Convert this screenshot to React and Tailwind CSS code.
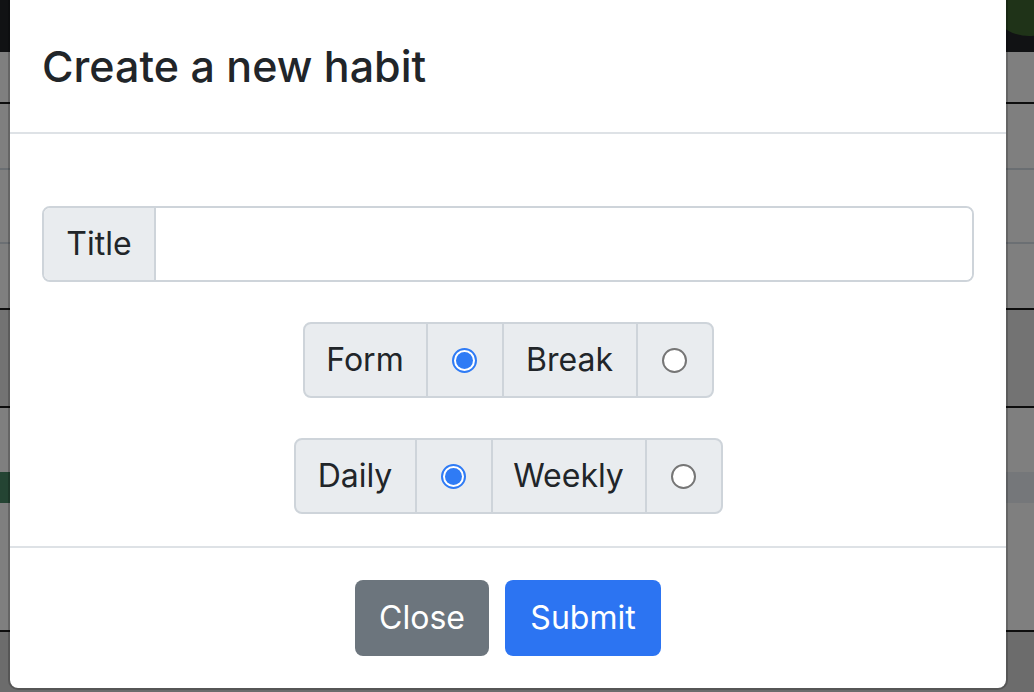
import React from "react";

function Radio({ checked }) {
  if (checked) {
    return (
      <div className="w-[25px] h-[25px] rounded-full border-2 border-[#2f7bf5] bg-white flex items-center justify-center">
        <div className="w-[17px] h-[17px] rounded-full bg-[#2f7bf5]" />
      </div>
    );
  }
  return <div className="w-[25px] h-[25px] rounded-full border-2 border-[#767676] bg-white" />;
}

function Segmented({ a, aw, b, bw }) {
  return (
    <div className="flex h-[76px] border-2 border-[#ced4da] rounded-[8px] overflow-hidden bg-[#e9ecef] divide-x-2 divide-[#ced4da]">
      <div className={`${aw} flex items-center justify-center text-[32px] text-[#212529]`}>{a}</div>
      <div className="w-[76px] flex items-center justify-center">
        <Radio checked />
      </div>
      <div className={`${bw} flex items-center justify-center text-[32px] text-[#212529]`}>{b}</div>
      <div className="w-[74px] flex items-center justify-center">
        <Radio />
      </div>
    </div>
  );
}

export default function App() {
  return (
    <div className="relative w-[1034px] h-[692px] overflow-hidden font-['Inter','Noto_Sans',sans-serif]">
      {/* dimmed page behind */}
      <div className="flex flex-col w-full h-full">
        <div className="h-[52px] bg-[#111214]" />
        <div className="h-[50px] bg-[#7f7f7f]" />
        <div className="h-[2px] bg-[#0d0d0d]" />
        <div className="h-[64px] bg-[#7f7f7f]" />
        <div className="h-[2px] bg-[#6a6e72]" />
        <div className="h-[72px] bg-[#7f7f7f]" />
        <div className="h-[2px] bg-[#6b6f73]" />
        <div className="h-[64px] bg-[#7f7f7f]" />
        <div className="h-[2px] bg-[#0d0d0d]" />
        <div className="h-[96px] bg-[#737373]" />
        <div className="h-[2px] bg-[#0d0d0d]" />
        <div className="h-[64px] bg-[#7f7f7f]" />
        <div className="h-[31px] flex">
          <div className="w-[500px] bg-[#244433]" />
          <div className="flex-1 bg-[#75777a]" />
        </div>
        <div className="h-[127px] bg-[#7f7f7f]" />
        <div className="h-[2px] bg-[#0d0d0d]" />
        <div className="flex-1 bg-[#6c6c6c]" />
      </div>
      <div className="absolute left-[985px] top-[-52px] w-[88px] h-[88px] rounded-full bg-[#1f3318]" />

      {/* modal */}
      <div className="absolute left-[8px] top-[-20px] w-[1000px] bg-white bg-clip-padding border-2 border-[rgba(0,0,0,0.2)] rounded-[10px] flex flex-col">
        <div className="h-[152px] border-b-2 border-[#dee2e6] px-[32px] pt-[58px] pb-[40px]">
          <h5 className="text-[43px] leading-[52px] font-medium text-[#212529]">Create a new habit</h5>
        </div>
        <div className="flex flex-col items-center gap-[40px] px-[32px] pt-[72px] pb-[32px]">
          <div className="w-full flex h-[76px] border-2 border-[#ced4da] rounded-[8px] overflow-hidden">
            <div className="w-[112px] bg-[#e9ecef] border-r-2 border-[#ced4da] flex items-center justify-center text-[32px] text-[#212529]">
              Title
            </div>
            <div className="flex-1 bg-white" />
          </div>
          <Segmented a="Form" aw="w-[123px]" b="Break" bw="w-[134px]" />
          <Segmented a="Daily" aw="w-[121px]" b="Weekly" bw="w-[154px]" />
        </div>
        <div className="border-t-2 border-[#dee2e6] flex justify-center gap-[16px] pt-[32px] pb-[32px]">
          <button className="w-[134px] h-[76px] rounded-[8px] bg-[#6c757d] text-white text-[32px]">Close</button>
          <button className="w-[156px] h-[76px] rounded-[8px] bg-[#2c74f2] text-white text-[32px]">Submit</button>
        </div>
      </div>
    </div>
  );
}
